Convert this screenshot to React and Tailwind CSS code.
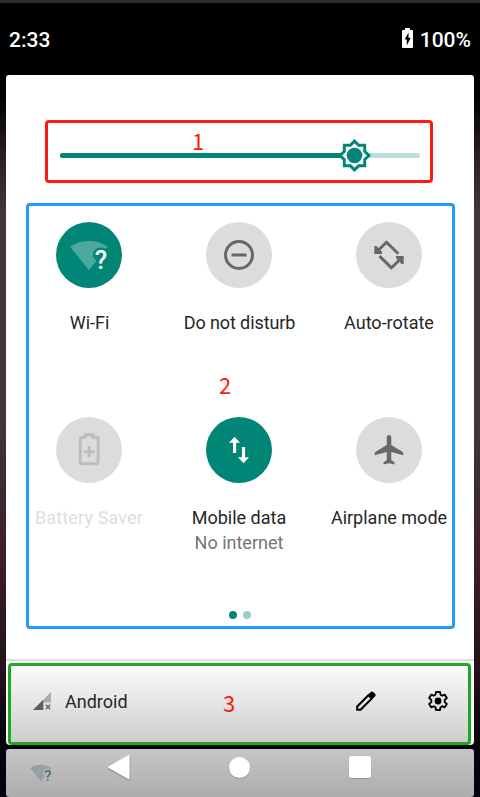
import React from "react";

function WifiUnknown({ className, fan, mark, cut }) {
  return (
    <svg viewBox="0 0 42 38" className={className}>
      <path d="M.8 7.6Q0 6.9 1 6.2C6 2.700 12 1 18.900 1s13 1.700 18 5.200q1 .7.2 1.400L34.500 11H31q-6.500 1-6.500 8l1.700 2.300-6.500 7.900q-.8.900-1.600 0Z" fill={fan} />
      <text x="24.800" y="29.300" fontSize="25.500" fontWeight="500" fontFamily="Roboto, sans-serif" fill={mark} stroke={cut} strokeWidth="5" paintOrder="stroke">?</text>
    </svg>
  );
}

function BrightnessThumb() {
  return (
    <svg viewBox="0 0 24 24" className="absolute left-[276.5px] top-[-15px] h-[35px] w-[35px]">
      <path fill="#008577" d="M20 8.69V4h-4.690L12 .69 8.690 4H4v4.690L.69 12 4 15.310V20h4.690L12 23.310 15.310 20H20v-4.690L23.310 12z" />
      <path fill="#f3f6f5" d="M18 14.480V18h-3.520L12 20.480 9.520 18H6v-3.520L3.520 12 6 9.520V6h3.520L12 3.520 14.480 6H18v3.520L20.480 12z" />
      <circle cx="12" cy="12" r="5.300" fill="#008577" />
    </svg>
  );
}

const icons = {
  wifi: <WifiUnknown className="ml-1 mt-[7px] h-[38px] w-[42px]" fan="#4ca99f" mark="#fff" cut="#008577" />,
  dnd: (
    <svg viewBox="0 0 24 24" className="h-9 w-9" fill="none" stroke="#686868" strokeWidth="2">
      <circle cx="12" cy="12" r="9" />
      <path d="M7 12h10" />
    </svg>
  ),
  rotate: (
    <svg viewBox="0 0 36 36" className="h-9 w-9" fill="none" stroke="#686868" strokeWidth="3">
      <path d="M7 13.500 15.500 5.200 27.300 16.800" strokeLinejoin="round" />
      <path d="M8.500 19.200 20.500 30.800 29 22.500" strokeLinejoin="round" />
      <path d="M3.300 9h2.200l5.500 6v2H3.300ZM32.700 27h-2.200L25 21v-2h7.700Z" fill="#686868" stroke="none" />
    </svg>
  ),
  battery: (
    <svg viewBox="0 0 36 36" className="h-9 w-9" fill="none" stroke="#bdbdbd" strokeWidth="2.900">
      <path d="M14.300 5.500H11q-1.700 0-1.700 1.700v22.900q0 1.700 1.700 1.700h14.400q1.700 0 1.700-1.700V7.200q0-1.700-1.700-1.700h-3.300V2.700h-7.800Z" />
      <path d="M18.200 14.200v11M12.700 19.700h11" />
    </svg>
  ),
  data: (
    <svg viewBox="0 0 36 36" className="h-9 w-9" fill="#fff">
      <path d="M13.600 4.700 19 10.700H15.200V21h-3.200V10.700H8Z" />
      <path d="M22.500 31.200 28 25.200H24.100V14.900h-3.200v10.300H17Z" />
    </svg>
  ),
  plane: (
    <svg viewBox="0 0 24 24" className="h-9 w-9" fill="#686868">
      <path d="M21.500 15.500v-1.200a1.300 1.300 0 0 0-.6-1.100L13.500 8.700V3.500a1.500 1.500 0 0 0-3 0v5.200l-7.400 4.500a1.300 1.300 0 0 0-.6 1.100v1.200l8-2.200v5.400L8.300 20.300v1.400l3.700-.9 3.700.9v-1.400l-2.200-1.600v-5.400Z" />
    </svg>
  ),
};

const tiles = [
  { icon: "wifi", label: "Wi-Fi", active: true, tracking: "pl-px" },
  { icon: "dnd", label: "Do not disturb", tracking: "pl-px tracking-[-0.1px]" },
  { icon: "rotate", label: "Auto-rotate", tracking: "" },
  { icon: "battery", label: "Battery Saver", disabled: true, tracking: "tracking-[0.15px]" },
  { icon: "data", label: "Mobile data", sub: "No internet", active: true, tracking: "" },
  { icon: "plane", label: "Airplane mode", tracking: "" },
];

function Tile({ icon, label, sub, active, disabled, tracking }) {
  return (
    <div className="flex h-[195px] flex-col items-center text-[18px] leading-[25px]">
      <div className={`flex h-[66px] w-[66px] items-center justify-center rounded-full ${active ? "bg-[#008577]" : "bg-[#dcdcdc]"}`}>
        {icons[icon]}
      </div>
      <span className={`mt-[22px] whitespace-nowrap ${tracking} ${disabled ? "text-[#dedede]" : "text-[#262626]"}`}>{label}</span>
      {sub && <span className="whitespace-nowrap text-[#757575]">{sub}</span>}
    </div>
  );
}

function Marker({ className, children }) {
  return (
    <span className={`absolute font-['Noto_Sans_CJK_SC',sans-serif] text-[22px] leading-[22px] text-[#ff1a10] ${className}`}>
      {children}
    </span>
  );
}

export default function App() {
  return (
    <div className="flex h-[797px] w-[480px] flex-col overflow-hidden bg-[linear-gradient(to_bottom,#000_0px,#000_95px,#2d2024_160px,#44343a_210px,#44343a_420px,#3a2029_560px,#22101c_680px,#05030c_740px,#05030c_797px)] font-['Roboto',sans-serif]">
      <header className="flex h-[75px] shrink-0 items-center justify-between border-t-[3px] border-[#2b2b2b] bg-black pl-[9px] pr-[9px] pt-[3px] text-[21px] font-medium leading-none text-white">
        <span>2:33</span>
        <div className="flex items-center gap-[7px]">
          <svg viewBox="0 0 11 20" className="mb-[5px] h-5 w-[11px]">
            <path fill="#fff" d="M3 0h5v2h2q1 0 1 1v16q0 1-1 1H1q-1 0-1-1V3q0-1 1-1h2Z" />
            <path fill="#000" d="M6.500 4.500 2.700 11.500h2.100v6L8.700 9.800H6.500Z" />
          </svg>
          <span>100%</span>
        </div>
      </header>

      <main className="mx-[6px] h-[670px] shrink-0 rounded-t-[3px] rounded-b-[4px] bg-white pt-[45px]">
        <section className="relative ml-[39px] h-[63px] w-[388px] rounded-[4px] border-[3px] border-[#ff1a10] pl-3 pt-[30px]">
          <div className="relative h-[5px] w-[360px] rounded-full bg-[#bbdfda]">
            <div className="h-full w-[294px] rounded-l-full bg-[#008577]" />
            <BrightnessThumb />
          </div>
          <Marker className="left-[144px] top-[6px]">1</Marker>
        </section>

        <section className="relative ml-5 mt-5 flex h-[426px] w-[429px] flex-col rounded-[4px] border-[3px] border-[#1e9bff] pt-4">
          <div className="-ml-[15px] grid w-[450px] grid-cols-3">
            {tiles.map((t) => (
              <Tile key={t.icon} {...t} />
            ))}
          </div>
          <div className="-ml-[1px] -mt-[1px] flex justify-center gap-[6px]">
            <span className="h-2 w-2 rounded-full bg-[#008577]" />
            <span className="h-2 w-2 rounded-full bg-[#93cec8]" />
          </div>
          <Marker className="left-[190px] top-[167px]">2</Marker>
        </section>

        <div className="mt-[30px] h-[2px] bg-[#dfdfdf]" />

        <footer className="relative ml-[2px] mt-[2px] flex h-[82px] w-[463px] items-center rounded-[4px] border-[3px] border-[#1aaa1e] bg-[linear-gradient(#fbfbfb,#cdcdcd)] pb-[6px] pl-[22px] pr-5">
          <svg viewBox="0 0 18 18" className="h-[18px] w-[18px]">
            <path fill="#ababab" d="M18 0v10.500h-7.500V18H0Z" />
            <path fill="#5d5d5d" d="M10.200 7.800V18H0Z" />
            <path d="m12.800 12.800 4.400 4.400m0-4.400-4.400 4.400" stroke="#666" strokeWidth="1.600" />
          </svg>
          <span className="ml-[14px] text-[18px] leading-[25px] text-[#262626]">Android</span>
          <svg viewBox="0 0 20 20" className="ml-auto h-5 w-5">
            <path d="M1.200 15.400v3.400h3.400L15.800 7.600 12.400 4.200Z" fill="none" stroke="#000" strokeWidth="2.100" />
            <path d="m11.500 4.200 3.300-3.300q1.200-1 2.400 0l1.900 1.900q1 1.200 0 2.400l-3.300 3.300Z" />
          </svg>
          <svg viewBox="2 2 20 20" className="ml-[52px] h-5 w-5">
            <path fill="none" stroke="#000" strokeWidth="1.900" strokeLinejoin="round" d="M10 3h4l.5 2.700 1.700 1 2.600-1 2 3.400-2.100 1.800v2.200l2.100 1.800-2 3.400-2.600-1-1.700 1L14 21h-4l-.5-2.700-1.700-1-2.600 1-2-3.400 2.100-1.800v-2.200L3.200 9.100l2-3.400 2.600 1 1.700-1Z" />
            <circle cx="12" cy="12" r="3.400" />
          </svg>
          <Marker className="left-[212px] top-[25px]">3</Marker>
        </footer>
      </main>

      <nav className="mx-[6px] mt-1 flex h-12 shrink-0 items-start rounded-[3px] bg-[linear-gradient(#c6c6c6,#adadad)]">
        <WifiUnknown className="ml-6 mt-[15px] h-[22px] w-6" fan="#98a0a3" mark="#536b78" cut="#b8b8b8" />
        <svg viewBox="0 0 24 27" className="ml-[53px] mt-[5px] h-[27px] w-6 drop-shadow-[0_1px_1px_rgba(0,0,0,0.25)]">
          <path fill="#fff" d="M1.500 12.500 21 1.200q1.500-.6 1.500 1v21.600q0 1.600-1.500 1L1.500 13.800q-.8-.7 0-1.300Z" />
        </svg>
        <span className="ml-[98px] mt-2 h-[21px] w-[21px] rounded-full bg-white shadow-[0_1px_1px_rgba(0,0,0,0.2)]" />
        <span className="ml-[99px] mt-[7px] h-[22px] w-[22px] rounded-[2px] bg-white shadow-[0_1px_1px_rgba(0,0,0,0.2)]" />
      </nav>
    </div>
  );
}
